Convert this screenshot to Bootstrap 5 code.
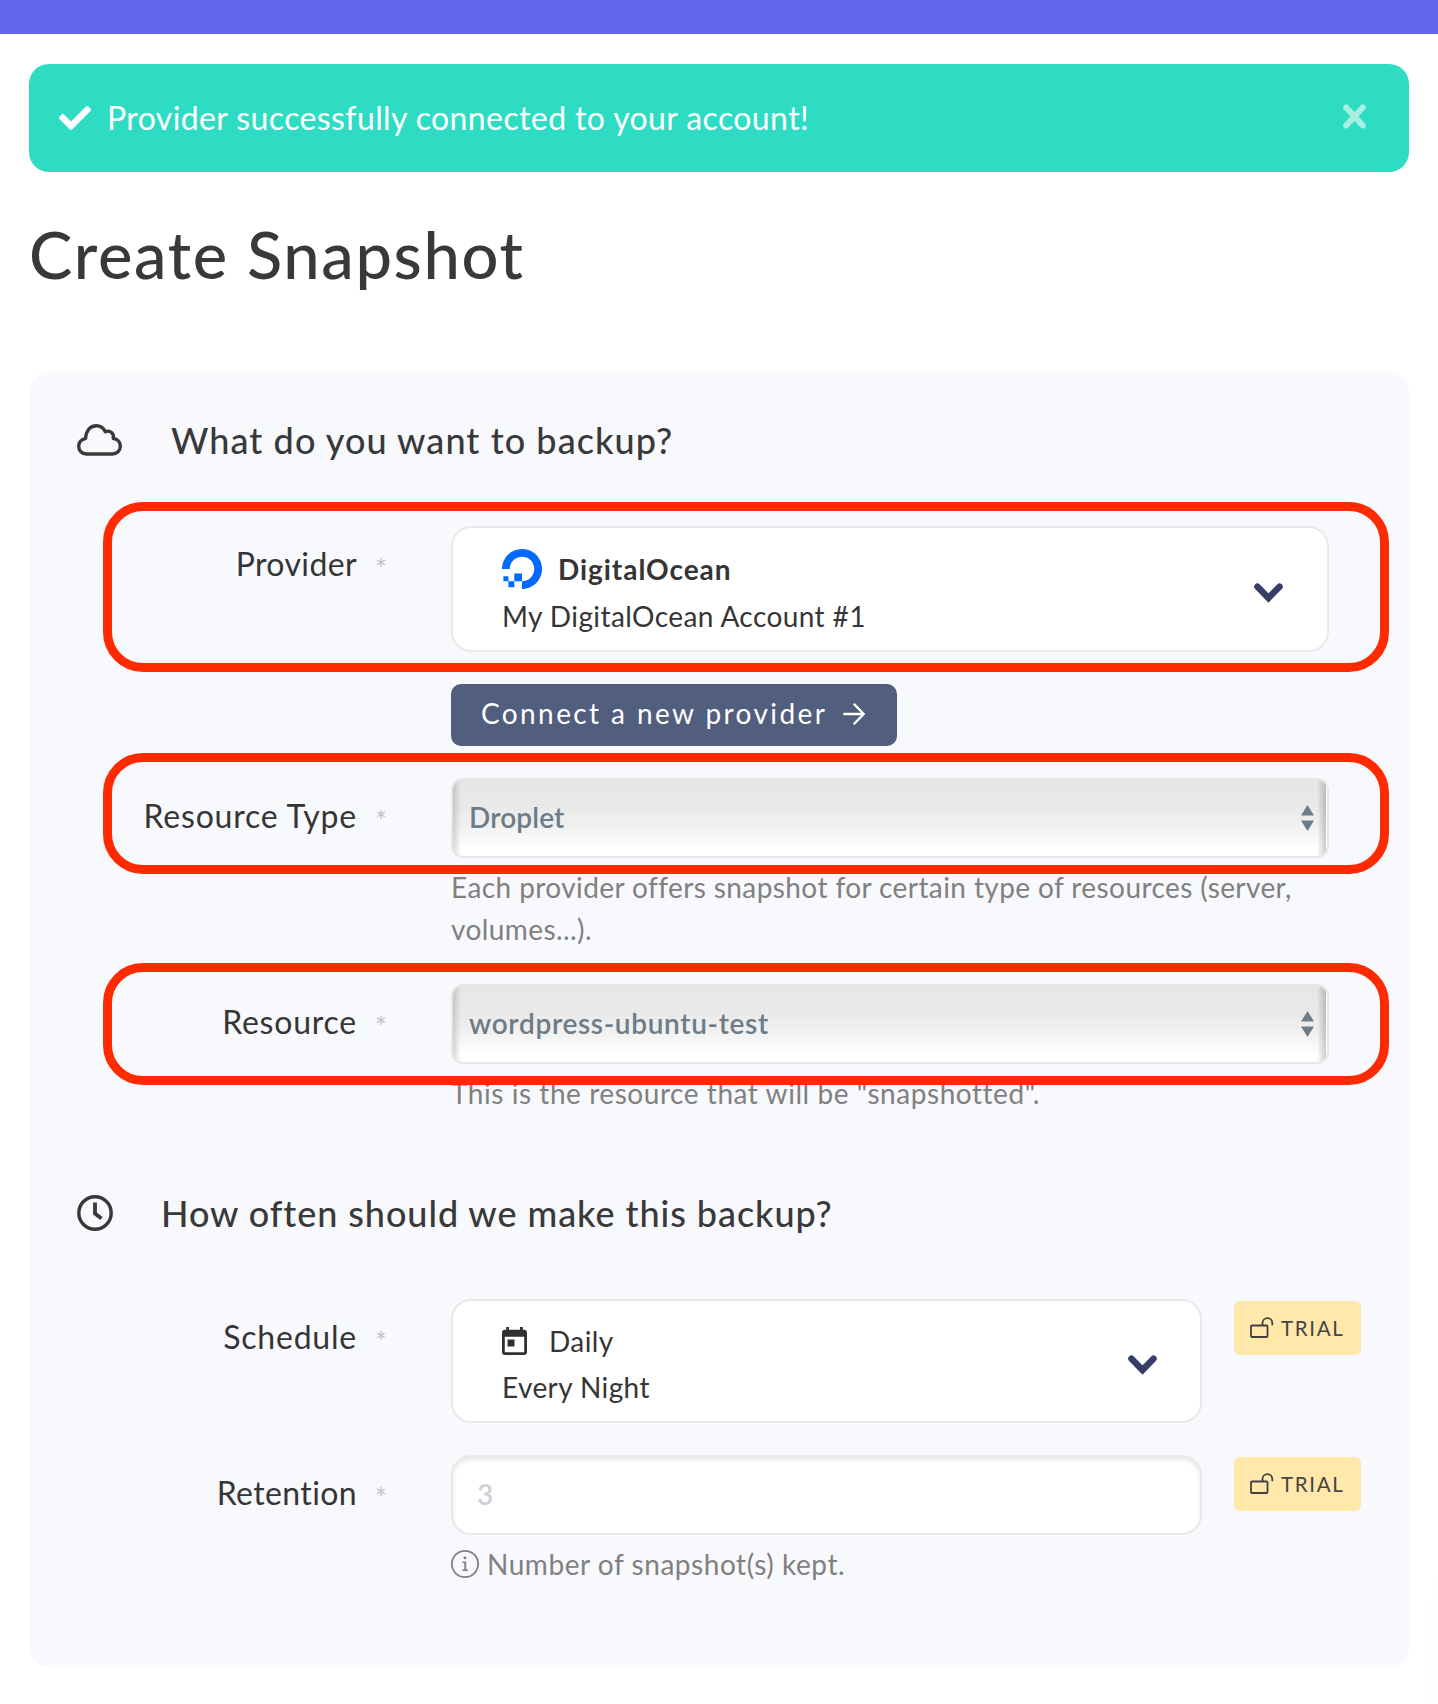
<!DOCTYPE html>
<html lang="en">
<head>
<meta charset="utf-8">
<meta name="viewport" content="width=device-width, initial-scale=1">
<title>Create Snapshot</title>
<link rel="stylesheet" href="https://cdn.jsdelivr.net/npm/bootstrap@5.3.0/dist/css/bootstrap.min.css">
<style>
  body { font-family: Lato, "Open Sans", sans-serif; font-size: 28px; line-height: 42px; color: #353535; background: #fff; overflow-x: hidden; }
  svg { display: block; flex: none; }
  .topbar { height: 34px; background: #6366ec; }
  .page-wrap { padding: 30px 29px 37px; }
  .flash { height: 108px; border: 0; border-radius: 20px; background: #2edcc3; color: #fff; padding: 0 43px 0 30px; font-size: 32px; letter-spacing: .39px; }
  .flash-close { border: 0; background: none; padding: 0; margin-top: -3px; }
  .page-title { font-size: 65px; line-height: 76px; font-weight: 500; color: #393939; margin: 44px 0 80px; letter-spacing: 1.65px; }
  .panel { background: #f8f9fd; border-radius: 20px; padding: 46px 48px 82px; height: 1295px; }
  .section-title { font-size: 36px; line-height: 44px; font-weight: 500; margin: 0 0 64px; color: #393939; letter-spacing: 1.07px; }
  .section-title.second { margin-top: 77px; letter-spacing: .93px; }
  .cloud-gap { margin-left: 49px; }
  .clock-gap { margin-left: 48px; }
  .day-gap { margin-left: 22px; }
  .field-label { width: 374px; padding: 18px 64px 0 0; font-size: 32px; line-height: 40px; letter-spacing: .78px; }
  .field-label.snug { letter-spacing: .38px; }
  .req { color: #c4c5c8; width: 12px; font-size: 28px; margin-left: 18px; padding-top: 5px; letter-spacing: 0; }
  .wide { margin-right: 32px; }
  .pick { background: #fff; border: 2px solid #e9e9e9; border-radius: 20px; height: 126px; padding: 18px 44px 0 49px; line-height: 46.5px; letter-spacing: .41px; }
  .pick.sched { height: 124px; padding: 16.5px 43px 0 49px; line-height: 46px; }
  .brand { letter-spacing: .95px; }
  .pick-chev { margin-top: -11px; }
  .pick.sched .pick-chev { margin-top: -9px; }
  .btn-connect { height: 62px; width: 446px; margin-top: 32px; border: 0; border-radius: 10px; background: #525e7e; color: #fff; font-size: 28px; line-height: 58px; padding: 0 32px 4px 30px; letter-spacing: 2.4px; }
  .btn-connect svg { margin-top: 2px; }
  .sel-box { height: 80px; border: 2px solid #e6e7e8; border-radius: 12px; padding: 0 0 3px 16px; font-size: 28px; font-weight: 600; color: #6c7c88; letter-spacing: .15px; appearance: none;
    background: linear-gradient(90deg, rgba(0,0,0,.15), rgba(0,0,0,0) 8px), linear-gradient(270deg, #fff 1px, rgba(0,0,0,.2) 1px, rgba(0,0,0,0) 10px), linear-gradient(#e6e6e6, #e9e9e9 35%, #f1f1f1 60%, #fff 92%); }
  .sel-box.loose { letter-spacing: .68px; }
  .sel-arrows { right: 15px; top: 27px; }
  .hint { margin: 8px 0 0; color: #808080; letter-spacing: .55px; }
  .hint.long { letter-spacing: .41px; }
  .row-gap { margin-top: 32px; }
  .row-gap-lg { margin-top: 34px; }
  .frame { left: 25.500px; width: 1286px; border: 9px solid #ff2a00; border-radius: 40px; pointer-events: none; }
  .frame-a { top: -24px; height: 170px; }
  .frame-b { top: -25px; height: 121px; }
  .frame-c { top: -21px; height: 122px; }
  .ret { height: 80px; border: 2px solid #e9e9e9; border-radius: 20px; padding: 0 24px 2px; font-size: 28px; font-weight: 600; box-shadow: inset 0 3px 4px rgba(0,0,0,.09); }
  .ret::placeholder { color: #ced2d6; opacity: 1; }
  .slot { width: 751px; }
  .trial { width: 127px; height: 54px; margin: 2px 0 0 32px; border-radius: 6px; background: #ffe8a9; font-size: 20.500px; line-height: 54px; color: #454545; padding-left: 16px; letter-spacing: 1.65px; }
  .trial span { margin-left: 7px; }
  .glow { right: -94px; top: 1560px; width: 80px; height: 200px; border-radius: 50%; box-shadow: 0 0 40px rgba(0,0,0,.06); }
</style>
</head>
<body>
<div class="position-relative overflow-hidden">
  <div class="topbar"></div>
  <main class="page-wrap">
    <div class="alert flash d-flex align-items-center mb-0" role="alert">
      <svg width="32" height="32" viewBox="0 0 512 512" fill="#fff"><path d="M173.898 439.404l-166.4-166.4c-9.997-9.997-9.997-26.206 0-36.204l36.203-36.204c9.997-9.998 26.207-9.998 36.204 0L192 312.69 432.095 72.596c9.997-9.997 26.207-9.997 36.204 0l36.203 36.204c9.997 9.997 9.997 26.206 0 36.204l-294.4 294.401c-9.998 9.997-26.207 9.997-36.204-.001z"/></svg>
      <span class="ms-3">Provider successfully connected to your account!</span>
      <button class="flash-close ms-auto" aria-label="Close"><svg width="23" height="25" viewBox="0 0 23 25" stroke="#a6efe1" stroke-width="6" stroke-linecap="round"><path d="M3.200 3.500l16.600 18M19.800 3.500l-16.600 18"/></svg></button>
    </div>

    <h1 class="page-title">Create Snapshot</h1>

    <section class="panel">
      <h2 class="section-title d-flex align-items-center">
        <svg width="45" height="32" viewBox="0 0 45 32" fill="none" stroke="#393939" stroke-width="3.400" stroke-linejoin="round"><path d="M9.500 30C4.800 30 1.700 26.500 1.700 22.300C1.700 18.500 4.300 15.400 8.600 14.300C9 7 13 1.700 19.400 1.700C23.600 1.700 26.600 4 28.300 7.800C33 5.600 37.500 9.500 36.300 14.500C40.700 15 43.300 18.400 43.300 22.300C43.300 26.700 40 30 35.500 30Z"/></svg>
        <span class="cloud-gap">What do you want to backup?</span>
      </h2>

      <div class="d-flex position-relative">
        <div class="field-label snug d-flex justify-content-end"><span>Provider</span><span class="req">*</span></div>
        <div class="flex-grow-1 wide">
          <div class="pick d-flex justify-content-between align-items-start">
            <div>
              <div class="brand d-flex align-items-center fw-bold"><svg width="40" height="40" viewBox="0 0 24 24" fill="#0069ff"><path d="M12.040 0C5.408-.02.005 5.370.005 11.992h4.638c0-4.923 4.882-8.731 10.064-6.855a6.950 6.950 0 014.147 4.148c1.889 5.177-1.924 10.055-6.840 10.064v-4.610H7.391v4.623h4.610V24c7.860 0 13.967-7.588 11.397-15.830-1.115-3.590-3.985-6.446-7.575-7.575A12.800 12.800 0 0012.039 0zM7.390 19.362H3.828v3.564H7.390zm-3.563 0v-2.978H.850v2.978z"/></svg><span class="ms-3">DigitalOcean</span></div>
              <div>My DigitalOcean Account #1</div>
            </div>
            <svg class="align-self-center pick-chev" width="29" height="20" viewBox="0 0 29 20" fill="none" stroke="#343e66" stroke-width="6.500" stroke-linecap="round"><path d="M3.500 3.700L14.500 15L25.500 3.700"/></svg>
          </div>
        </div>
        <div class="frame frame-a position-absolute"></div>
      </div>

      <div class="d-flex">
        <div class="field-label py-0"></div>
        <button class="btn btn-connect d-flex align-items-center"><span>Connect a new provider</span>
          <svg class="ms-auto" width="22" height="22" viewBox="0 0 22 22" fill="none" stroke="#fff" stroke-width="2.500" stroke-linecap="round" stroke-linejoin="round"><path d="M1.300 11H20.500M11.500 1.500L20.700 11L11.500 20.500"/></svg>
        </button>
      </div>

      <div class="d-flex position-relative row-gap">
        <label class="field-label d-flex justify-content-end" for="rtype"><span>Resource Type</span><span class="req">*</span></label>
        <div class="flex-grow-1 wide">
          <div class="position-relative">
            <select class="sel-box w-100" id="rtype"><option>Droplet</option></select>
            <svg class="sel-arrows position-absolute" width="13" height="26" viewBox="0 0 13 26" fill="#6c7c88"><path d="M0 10.500L6.500 0L13 10.500ZM0 15.500L6.500 26L13 15.500Z"/></svg>
          </div>
          <p class="hint long">Each provider offers snapshot for certain type of resources (server,<br>volumes...).</p>
        </div>
        <div class="frame frame-b position-absolute"></div>
      </div>

      <div class="d-flex position-relative row-gap-lg">
        <label class="field-label d-flex justify-content-end" for="res"><span>Resource</span><span class="req">*</span></label>
        <div class="flex-grow-1 wide">
          <div class="position-relative">
            <select class="sel-box loose w-100" id="res"><option>wordpress-ubuntu-test</option></select>
            <svg class="sel-arrows position-absolute" width="13" height="26" viewBox="0 0 13 26" fill="#6c7c88"><path d="M0 10.500L6.500 0L13 10.500ZM0 15.500L6.500 26L13 15.500Z"/></svg>
          </div>
          <p class="hint">This is the resource that will be "snapshotted".</p>
        </div>
        <div class="frame frame-c position-absolute"></div>
      </div>

      <h2 class="section-title second d-flex align-items-center">
        <svg width="36" height="36" viewBox="0 0 36 36" fill="none" stroke="#393939" stroke-width="3.400"><circle cx="18" cy="18" r="16.200"/><path stroke-width="3.800" d="M18 7.500V18.500L24.500 23.500"/></svg>
        <span class="clock-gap">How often should we make this backup?</span>
      </h2>

      <div class="d-flex">
        <div class="field-label d-flex justify-content-end"><span>Schedule</span><span class="req">*</span></div>
        <div class="slot">
          <div class="pick sched d-flex justify-content-between align-items-start">
            <div>
              <div class="d-flex align-items-center"><svg width="25" height="28" viewBox="3 1 18 20" preserveAspectRatio="none" fill="#303030"><path d="M19 3h-1V1h-2v2H8V1H6v2H5c-1.110 0-1.990.9-1.990 2L3 19c0 1.100.89 2 2 2h14c1.100 0 2-.9 2-2V5c0-1.100-.9-2-2-2zm0 16H5V8h14v11zM7 10h5v5H7z"/></svg><span class="day-gap">Daily</span></div>
              <div>Every Night</div>
            </div>
            <svg class="align-self-center pick-chev" width="29" height="20" viewBox="0 0 29 20" fill="none" stroke="#343e66" stroke-width="6.500" stroke-linecap="round"><path d="M3.500 3.700L14.500 15L25.500 3.700"/></svg>
          </div>
        </div>
        <div class="trial d-flex align-items-center"><svg width="24" height="22" viewBox="0 0 24 22" fill="none" stroke="#404040" stroke-width="1.800" stroke-linecap="round"><rect x="1" y="8.500" width="16.500" height="11.500" rx="1"/><path d="M12.500 8V6A4.900 4.900 0 0 1 22.300 6V7.500"/></svg><span>TRIAL</span></div>
      </div>

      <div class="d-flex row-gap">
        <label class="field-label snug d-flex justify-content-end" for="ret"><span>Retention</span><span class="req">*</span></label>
        <div class="slot">
          <input class="form-control ret" id="ret" placeholder="3">
          <p class="hint d-flex align-items-center"><svg width="28" height="28" viewBox="0 0 16 16" fill="#808080"><path d="M8 15A7 7 0 1 1 8 1a7 7 0 0 1 0 14m0 1A8 8 0 1 0 8 0a8 8 0 0 0 0 16"/><path d="M6.500 6.600H8.700V11.200H9.800V12H6.400V11.200H7.600V7.400H6.500z"/><circle cx="8" cy="4.500" r=".85"/></svg><span class="day-text ps-1 ms-1">Number of snapshot(s) kept.</span></p>
        </div>
        <div class="trial d-flex align-items-center"><svg width="24" height="22" viewBox="0 0 24 22" fill="none" stroke="#404040" stroke-width="1.800" stroke-linecap="round"><rect x="1" y="8.500" width="16.500" height="11.500" rx="1"/><path d="M12.500 8V6A4.900 4.900 0 0 1 22.300 6V7.500"/></svg><span>TRIAL</span></div>
      </div>
    </section>
  </main>
  <div class="glow position-absolute"></div>
</div>
<script src="https://cdn.jsdelivr.net/npm/bootstrap@5.3.0/dist/js/bootstrap.bundle.min.js"></script>
</body>
</html>
